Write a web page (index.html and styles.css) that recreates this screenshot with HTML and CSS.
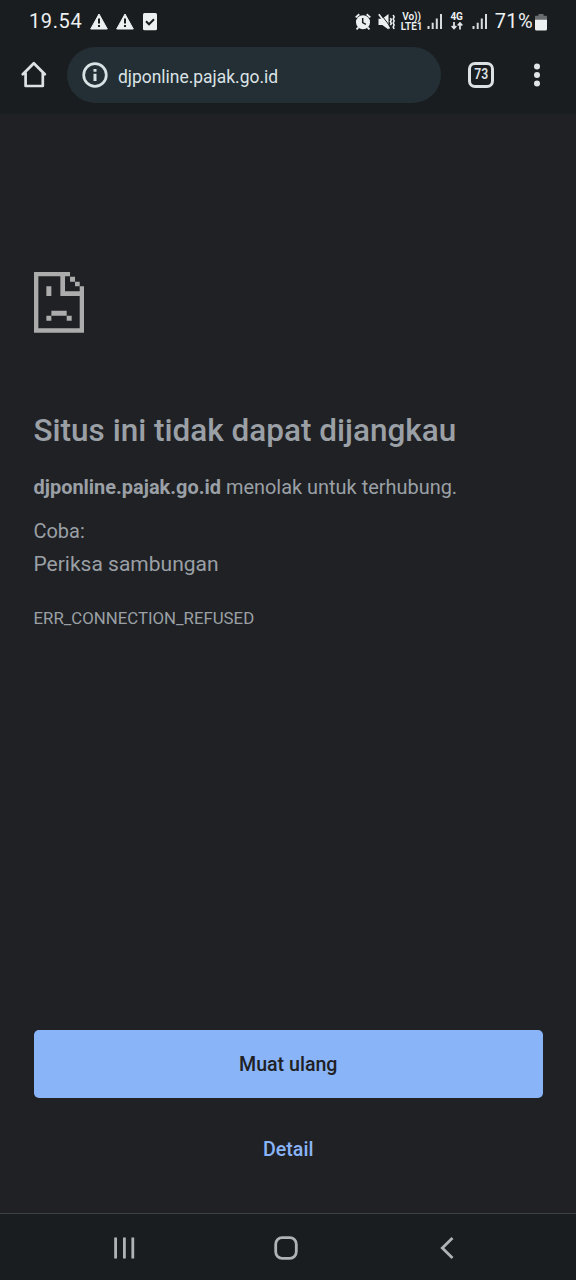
FILE: index.html
```html
<!DOCTYPE html>
<html lang="id">
<head>
<meta charset="utf-8">
<title>djponline.pajak.go.id</title>
<link rel="stylesheet" href="styles.css">
</head>
<body>
<div class="screen">
  <header class="status">
    <span class="clock">19.54</span>
    <svg class="warning" width="18" height="17" viewBox="0 0 18 17"><path d="M9 1 17.3 16H.7Z" fill="#edf0f1" stroke="#edf0f1" stroke-linejoin="round"/><path d="M9 5.5v5M9 12v2" stroke="#1a1d20" stroke-width="2"/></svg>
    <svg class="warning" width="18" height="17" viewBox="0 0 18 17"><path d="M9 1 17.3 16H.7Z" fill="#edf0f1" stroke="#edf0f1" stroke-linejoin="round"/><path d="M9 5.5v5M9 12v2" stroke="#1a1d20" stroke-width="2"/></svg>
    <svg class="task" width="14" height="18" viewBox="0 0 14 18"><rect width="14" height="17.3" rx="1.5" fill="#edf0f1"/><path d="m3 8.3 3 3 5-5" fill="none" stroke="#1a1d20" stroke-width="2"/></svg>
    <div class="indicators">
      <svg class="alarm" width="16" height="18" viewBox="0 0 16 18"><circle cx="8" cy="9.2" r="7" fill="#edf0f1"/><path d="M.7 4.4 4.3 1.3M11.7 1.3l3.6 3.1M3.5 14.4l-2 2M12.5 14.4l2 2" stroke="#edf0f1" stroke-width="1.8"/><path d="M7.7 5v4.6l3.2 1.7" fill="none" stroke="#1a1d20" stroke-width="1.5"/></svg>
      <svg class="mute" width="18" height="18" viewBox="0 0 18 18"><path d="M.5 5.7h3.8L10.5 1v15.5L4.3 12H.5Z" fill="#edf0f1"/><path d="m2.300.6 9.700 12.600" stroke="#1a1d20" stroke-width="1"/><path d="m.8 1.200 10.700 14.300" stroke="#edf0f1" stroke-width="1.700"/><path d="m12.400 5 .9 1.800-.9 1.800.9 1.800-.9 1.800M15.200 2l.9 2-.9 2 .9 2-.9 2 .9 2-.9 2 .9 2" fill="none" stroke="#edf0f1" stroke-width="1.600"/></svg>
      <span class="volte"><span>Vo))</span><span>LTE1</span></span>
      <svg class="signal" width="16" height="17" viewBox="0 0 16 17" fill="#d8dbdd"><path d="M.5 13h2v3h-2ZM4.700 9.700h2V16h-2ZM8.800 5.400h2V16h-2Z"/><path d="M13 1h2v15h-2Z"/></svg>
      <span class="network"><span>4G</span><svg width="12" height="8" viewBox="0 0 12 8" fill="none" stroke="#e4e7e8" stroke-width="1.700"><path d="M3 0v6.300M.7 4 3 6.500 5.300 4M9 7.500V1.200M6.700 3.500 9 1l2.300 2.500"/></svg></span>
      <svg class="signal" width="16" height="17" viewBox="0 0 16 17" fill="#d8dbdd"><path d="M.5 13h2v3h-2ZM4.700 9.700h2V16h-2ZM8.800 5.400h2V16h-2Z"/><path d="M13 1h2v15h-2Z"/></svg>
      <span class="percent">71%</span>
      <svg class="battery" width="12" height="18" viewBox="0 0 12 18"><path d="M3.500 1h5v1.800H11q1 0 1 1V7H0V3.800q0-1 1-1h2.500Z" fill="#6a6d70"/><path d="M0 6.700h12V16q0 1.500-1.500 1.500h-9Q0 17.500 0 16Z" fill="#edf0f1"/></svg>
    </div>
  </header>

  <nav class="toolbar">
    <svg class="home" width="26" height="27" viewBox="0 0 26 27"><path d="M1.800 13.300 12.800 2.300l11 11M4.600 12v13h17.200V12" fill="none" stroke="#dce2e4" stroke-width="2.700" stroke-linejoin="round" stroke-linecap="round"/></svg>
    <div class="address">
      <svg width="26" height="26" viewBox="0 0 26 26"><circle cx="13" cy="13" r="11.300" fill="none" stroke="#d8e2e5" stroke-width="2.700"/><path d="M13 11.800v7.200M13 7v2.700" stroke="#d8e2e5" stroke-width="3"/></svg>
      <span class="url">djponline.pajak.go.id</span>
    </div>
    <span class="tabs"><span class="count">73</span></span>
    <svg class="more" width="8" height="24" viewBox="0 0 8 24" fill="#e1e5e7"><circle cx="4" cy="3.500" r="3"/><circle cx="4" cy="12" r="3"/><circle cx="4" cy="20.400" r="3"/></svg>
  </nav>

  <main class="page">
    <svg class="sad" viewBox="0 0 151 182" fill="#acacac"><path d="M0 0h108v14h15v15h14v14h14v139H0ZM13 13v156h124V72H79V13Zm80 0v45h44V43h-14V29h-15V13Z" fill-rule="evenodd"/><path d="M37 43h15v29H37ZM52 116h46v15H52ZM37 131h15v15H37ZM98 131h15v15H98Z"/></svg>
    <h1 class="title">Situs ini tidak dapat dijangkau</h1>
    <p class="summary"><strong>djponline.pajak.go.id</strong> menolak untuk terhubung.</p>
    <p class="try">Coba:</p>
    <p class="hint">Periksa sambungan</p>
    <p class="code">ERR_CONNECTION_REFUSED</p>
    <div class="actions">
      <button class="reload">Muat ulang</button>
      <button class="detail">Detail</button>
    </div>
  </main>

  <footer class="navbar">
    <svg width="22" height="24" viewBox="0 0 22 24" fill="none" stroke="#afb3b6" stroke-width="2.800"><path d="M1.600 1.500v21M10.400 1.500v21M18.800 1.500v21"/></svg>
    <svg class="nav-home" width="24" height="24" viewBox="0 0 24 24" fill="none" stroke="#afb3b6" stroke-width="2.800"><rect x="1.700" y="1.700" width="20.600" height="20.600" rx="6.500"/></svg>
    <svg width="14" height="24" viewBox="0 0 14 24" fill="none" stroke="#afb3b6" stroke-width="2.800"><path d="M12.500 2 2.300 12l10.200 10"/></svg>
  </footer>
</div>
</body>
</html>
```
FILE: styles.css
```css
* { box-sizing: border-box; }
body { margin: 0; background: #202124; font-family: Roboto, sans-serif; }
svg { display: block; flex: none; }
.screen { width: 576px; height: 1280px; display: flex; flex-direction: column; overflow: hidden; }

.status { height: 44px; flex: none; background: #1a1d20; display: flex; align-items: center; padding: 0 29px; color: #edf0f1; }
.clock { font-size: 20px; letter-spacing: .6px; line-height: 24px; width: 61px; margin-top: -2px; }
.warning { margin: -2px 8px 0 0; }
.task { margin: -1px 0 0 1px; }
.indicators { display: flex; align-items: center; margin-left: auto; height: 100%; }
.alarm { margin-top: -1px; }
.mute { margin: -1px 0 0 7px; }
.volte { display: flex; flex-direction: column; align-items: center; width: 22px; margin: -1px 0 0 5px; font-size: 10px; line-height: 10px; font-weight: 600; }
.signal { margin: -1px 0 0 4px; }
.network { display: flex; flex-direction: column; align-items: center; width: 14px; margin: -2px 0 0 7px; font-size: 10px; line-height: 10px; font-weight: 700; }
.network + .signal { margin-left: 8px; }
.percent { font-size: 20px; letter-spacing: .4px; line-height: 24px; margin: -2px 2px 0 7px; }

.toolbar { height: 70px; flex: none; background: #1a1d20; display: flex; align-items: flex-start; padding: 3px 35px 0 21px; }
.home { margin-top: 14px; }
.address { width: 374px; height: 56px; margin-left: 20px; padding-left: 15px; border-radius: 28px; background: #232f34; display: flex; align-items: center; }
.url { margin: 4px 0 0 10px; color: #dbe2e5; font-size: 17.450px; }
.tabs { width: 26px; height: 26px; margin: 15px 0 0 27px; border: 3px solid #dce1e4; border-radius: 7px; color: #dce1e4; display: flex; align-items: center; justify-content: center; }
.count { font-size: 14.500px; line-height: 20px; font-weight: 600; transform: scaleX(.84); }
.more { margin: 16px 0 0 auto; }

.page { flex: 1; display: flex; flex-direction: column; padding: 158px 33px 0 33.500px; color: #9aa0a6; }
.sad { width: 50.400px; height: 60.700px; }
.title { margin: 77.300px 0 0; font-size: 31.500px; line-height: 42px; font-weight: 500; white-space: nowrap; }
.summary, .try, .hint, .code { margin: 0; font-size: 19.950px; line-height: 30px; white-space: nowrap; }
.summary { margin-top: 20px; }
.try { margin-top: 14px; }
.hint { margin-top: 3px; font-size: 21px; }
.code { margin-top: 24px; font-size: 16.800px; }
.actions { display: flex; flex-direction: column; margin-top: auto; padding-bottom: 34px; }
.reload, .detail { border: 0; font-family: inherit; font-size: 19.600px; font-weight: 500; padding: 0; }
.reload { height: 68px; border-radius: 5px; background: #8ab4f8; color: #202124; padding-top: 1px; }
.detail { height: 60px; margin-top: 21px; background: none; color: #8ab4f8; }

.navbar { height: 67px; flex: none; border-top: 1px solid #3b4043; background: #1a1d20; display: flex; justify-content: space-between; align-items: center; padding: 2px 122px 0 114px; }
.nav-home { margin-right: 4px; }
```
